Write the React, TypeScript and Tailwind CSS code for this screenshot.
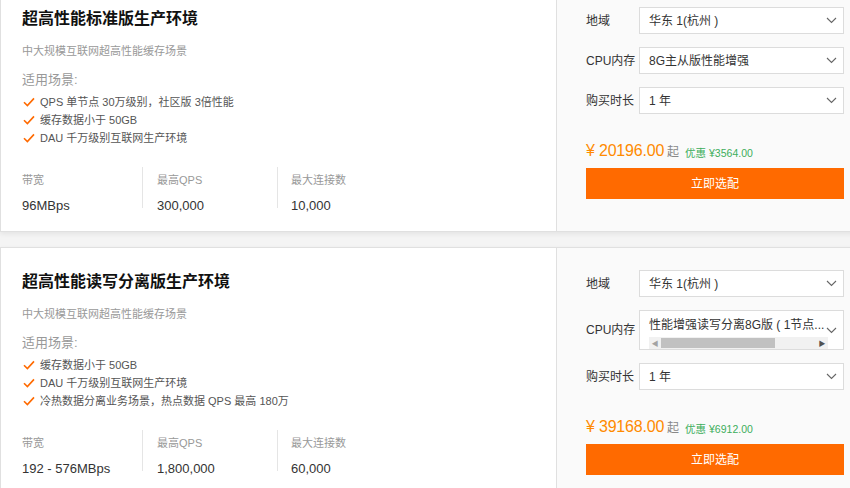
import React from "react";

type Stat = { label: string; value: string };
type Card = {
  title: string;
  subtitle: string;
  items: string[];
  stats: Stat[];
  cpu: string;
  cpuScroll?: boolean;
  price: string;
  discount: string;
};

const cards: Card[] = [
  {
    title: "超高性能标准版生产环境",
    subtitle: "中大规模互联网超高性能缓存场景",
    items: ["QPS 单节点 30万级别，社区版 3倍性能", "缓存数据小于 50GB", "DAU 千万级别互联网生产环境"],
    stats: [
      { label: "带宽", value: "96MBps" },
      { label: "最高QPS", value: "300,000" },
      { label: "最大连接数", value: "10,000" },
    ],
    cpu: "8G主从版性能增强",
    price: "20196.00",
    discount: "¥3564.00",
  },
  {
    title: "超高性能读写分离版生产环境",
    subtitle: "中大规模互联网超高性能缓存场景",
    items: ["缓存数据小于 50GB", "DAU 千万级别互联网生产环境", "冷热数据分离业务场景，热点数据 QPS 最高 180万"],
    stats: [
      { label: "带宽", value: "192 - 576MBps" },
      { label: "最高QPS", value: "1,800,000" },
      { label: "最大连接数", value: "60,000" },
    ],
    cpu: "性能增强读写分离8G版 ( 1节点...",
    cpuScroll: true,
    price: "39168.00",
    discount: "¥6912.00",
  },
];

function Check() {
  return (
    <svg width="12" height="10" viewBox="0 0 12 10" className="shrink-0">
      <path d="M1 5.2 L4.4 8.6 L11 1.4" fill="none" stroke="#ff6a00" strokeWidth="1.6" />
    </svg>
  );
}

function Chevron() {
  return (
    <svg width="11" height="7" viewBox="0 0 11 7" className="shrink-0">
      <path d="M1 1 L5.5 5.5 L10 1" fill="none" stroke="#666" strokeWidth="1.1" />
    </svg>
  );
}

function Select({ text, scroll }: { text: string; scroll?: boolean }) {
  if (scroll) {
    return (
      <div className="flex h-[40px] w-[205px] items-center border border-[#dcdcdc] bg-white pr-[6px]">
        <div className="flex h-full min-w-0 flex-1 flex-col pl-[9px] pt-[6px]">
          <div className="whitespace-nowrap text-[12px] leading-[16px] text-[#333]">{text}</div>
          <div className="mt-[4px] flex h-[12px] w-[179px] items-center bg-[#f1f1f1]">
            <span className="flex w-[12px] justify-center text-[7px] leading-none text-[#a3a3a3]">◀</span>
            <div className="h-[10px] w-[114px] bg-[#c1c1c1]" />
            <div className="flex-1" />
            <span className="flex w-[12px] justify-center text-[7px] leading-none text-[#505050]">▶</span>
          </div>
        </div>
        <Chevron />
      </div>
    );
  }
  return (
    <div className="flex h-[27px] w-[205px] items-center justify-between border border-[#dcdcdc] bg-white pl-[9px] pr-[6px]">
      <span className="whitespace-nowrap text-[12px] text-[#333]">{text}</span>
      <Chevron />
    </div>
  );
}

function Row({ label, children }: { label: string; children: React.ReactNode }) {
  return (
    <div className="flex items-center">
      <div className="w-[53px] whitespace-nowrap text-[12px] text-[#333]">{label}</div>
      {children}
    </div>
  );
}

function ProductCard({ c, first }: { c: Card; first?: boolean }) {
  return (
    <div
      className={
        "flex h-[248px] w-[870px] border border-[#e0e0e0] bg-white shadow-[0_2px_5px_rgba(0,0,0,0.07)] " +
        (first ? "-mt-[16px] mb-[15px]" : "")
      }
    >
      <div className="w-[555px] shrink-0 pl-[21px] pt-[24px]">
        <div className="text-[16px] font-bold leading-[20px] text-[#111]">{c.title}</div>
        <div className="mt-[14px] text-[11px] leading-[16px] text-[#999]">{c.subtitle}</div>
        <div className="mt-[12px] text-[13px] leading-[18px] text-[#999]">适用场景:</div>
        <div className="mt-[4px] flex flex-col">
          {c.items.map((t) => (
            <div key={t} className="flex h-[18px] items-center gap-[5px] pl-[1px]">
              <Check />
              <span className="text-[11px] text-[#555]">{t}</span>
            </div>
          ))}
        </div>
        <div className="mt-[20px] flex">
          {c.stats.map((s, i) => (
            <div
              key={s.label}
              className={
                "flex h-[41px] flex-col " +
                (i === 0 ? "w-[120px]" : i === 1 ? "w-[135px] border-l border-[#e5e5e5] pl-[14px]" : "w-[135px] border-l border-[#e5e5e5] pl-[13px]")
              }
            >
              <div className="pt-[5px] text-[11px] leading-[16px] text-[#999]">{s.label}</div>
              <div className="mt-[9px] whitespace-nowrap text-[13px] leading-[18px] text-[#333]">{s.value}</div>
            </div>
          ))}
        </div>
      </div>
      <div className="flex-1 border-l border-[#e0e0e0] bg-[#fafafa] pl-[29px] pt-[22px]">
        <div className="flex flex-col gap-[13px]">
          <Row label="地域">
            <Select text="华东 1(杭州 )" />
          </Row>
          <Row label="CPU内存">
            <Select text={c.cpu} scroll={c.cpuScroll} />
          </Row>
          <Row label="购买时长">
            <Select text="1 年" />
          </Row>
        </div>
        <div className="mt-[25px] flex h-[22px] items-end whitespace-nowrap">
          <span className="text-[16px] leading-[20px] tracking-[-0.2px] text-[#ff8a00]">¥ {c.price}</span>
          <span className="ml-[3px] text-[12px] leading-[17px] text-[#888]">起</span>
          <span className="ml-[6px] text-[10.5px] leading-[16px] text-[#3dae5c]">优惠 {c.discount}</span>
        </div>
        <button className="mt-[7px] flex h-[31px] w-[258px] items-center justify-center bg-[#ff6a00] text-[12px] text-white">
          立即选配
        </button>
      </div>
    </div>
  );
}

export default function App() {
  return (
    <div className="h-[488px] w-[850px] overflow-hidden bg-[#f4f4f4] font-['Liberation_Sans','Noto_Sans_CJK_SC',sans-serif]">
      <ProductCard c={cards[0]} first />
      <ProductCard c={cards[1]} />
    </div>
  );
}
